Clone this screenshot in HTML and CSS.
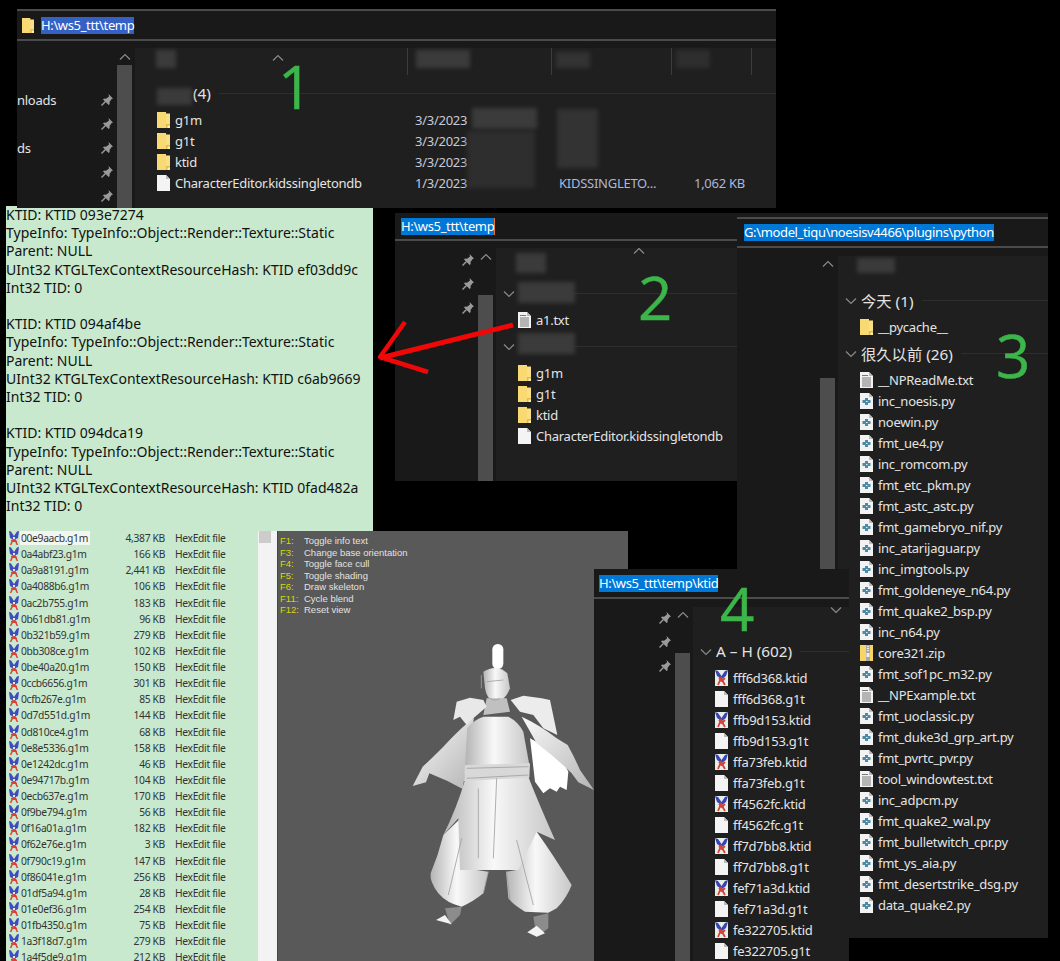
FILE: index.html
```html
<!DOCTYPE html>
<html lang="en">
<head>
  <meta charset="UTF-8">
  <title>temp</title>
  <link rel="stylesheet" href="styles.css">
</head>
<body>
  <svg class="defs">
    <symbol id="folder" viewBox="0 0 13 16">
      <path d="M0 0h7l2 1.500h4V16H0z" fill="#fbdf86"/>
      <path d="M0 0h9v12h4v4H0z" fill="#f9d972"/>
      <path d="M9 12h4v4H9z" fill="#e0b94c"/>
      <path d="M10.500 13.500H13V16h-2.500z" fill="#fff0b0"/>
    </symbol>
    <symbol id="file" viewBox="0 0 13 16">
      <path d="M0 0h9l4 4v12H0z" fill="#f4f4f4"/>
      <path d="M9 0l4 4H9z" fill="#bdbdbd"/>
    </symbol>
    <symbol id="txt" viewBox="0 0 13 16">
      <path d="M0 0h9l4 4v12H0z" fill="#f2f2f2"/>
      <path d="M9 0l4 4H9z" fill="#b8b8b8"/>
      <path d="M2 3.500h6M2 6h9M2 8h9M2 10h9M2 12h9M2 14h9" stroke="#777" fill="none"/>
    </symbol>
    <symbol id="py" viewBox="0 0 13 16">
      <path d="M0 0h9l4 4v12H0z" fill="#f2f2f2"/>
      <path d="M9 0l4 4H9z" fill="#bdbdbd"/>
      <path d="M5 5h3v2h2.500v3H8v2H5v-2H2.500V7H5z" fill="#4b8ba8"/>
      <path d="M6 8h1.500v1H6z" fill="#e8f2f6"/>
    </symbol>
    <symbol id="ktid" viewBox="0 0 13 16">
      <path d="M0 0h13v16H0z" fill="#e6efe6"/>
      <path d="M4 7h5v5H4z" fill="#8fc58f"/>
      <path d="M0 0l3 1 3.500 5L10 1l3-1-2 6-4.500 3L2 6z" fill="#3a45b4"/>
      <path d="M3 15L6 8l4 7M10 8l-3 3-3-3" stroke="#d8403a" stroke-width="1.800" fill="none"/>
    </symbol>
    <symbol id="g1m" viewBox="0 0 10 14">
      <path d="M0 0l2 .5L5 5l3-4.500L10 0 9 7 5 9 1 7z" fill="#3f4cc0"/>
      <path d="M4 6h2v2H4z" fill="#e8f0e8"/>
      <path d="M1.500 14L4.500 8M8.500 14L5.500 8M2 9.500l6 1" stroke="#d8403a" stroke-width="1.500" fill="none"/>
    </symbol>
    <symbol id="zip" viewBox="0 0 13 16">
      <path d="M0 0h13v16H0z" fill="#f8d568"/>
      <path d="M6 0h4v16H6z" fill="#a8a8a8"/>
      <path d="M7 1h2v1H7zM7 3h2v1H7zM7 5h2v1H7zM6.500 8h3v4h-3z" fill="#eee"/>
    </symbol>
    <symbol id="pin" viewBox="0 0 14 14">
      <path d="M8.500 1l4.500 4.500-1.300.6-2.200 3 .2 2-1 1L3 6.500l1-1 2 .2 3-2.200z" fill="#9a9a9a"/>
      <path d="M5.500 8.500L1.500 12.500" stroke="#9a9a9a" stroke-width="1.500"/>
    </symbol>
    <symbol id="chev" viewBox="0 0 14 8">
      <path d="M2 6.500l5-5 5 5" stroke="#8a8a8a" stroke-width="1.200" fill="none"/>
    </symbol>
  </svg>

  <!-- window 1 -->
  <div class="win win1">
    <div class="addr">
      <svg class="addr-folder"><use href="#folder"/></svg>
      <span class="path path-blue">H:\ws5_ttt\temp</span>
    </div>
    <div class="pane">
      <div class="side">
        <div class="nav">
          <div class="nav-row"><span>nloads</span><svg class="pin"><use href="#pin"/></svg></div>
          <div class="nav-row"><span></span><svg class="pin"><use href="#pin"/></svg></div>
          <div class="nav-row"><span>ds</span><svg class="pin"><use href="#pin"/></svg></div>
          <div class="nav-row"><span></span><svg class="pin"><use href="#pin"/></svg></div>
          <div class="nav-row"><span></span><svg class="pin"><use href="#pin"/></svg></div>
        </div>
        <div class="scroll">
          <div class="up"><svg class="chev"><use href="#chev"/></svg></div>
          <div class="thumb"></div>
        </div>
      </div>
      <div class="main">
        <div class="head">
          <div class="col col-name"><svg class="chev sort"><use href="#chev"/></svg></div>
          <div class="col col-date"></div>
          <div class="col col-type"></div>
          <div class="col col-size"></div>
        </div>
        <div class="group group-plain"><span>(4)</span><i></i></div>
        <div class="row"><svg class="ico"><use href="#folder"/></svg><span class="name">g1m</span><span class="date">3/3/2023</span></div>
        <div class="row"><svg class="ico"><use href="#folder"/></svg><span class="name">g1t</span><span class="date">3/3/2023</span></div>
        <div class="row"><svg class="ico"><use href="#folder"/></svg><span class="name">ktid</span><span class="date">3/3/2023</span></div>
        <div class="row"><svg class="ico"><use href="#file"/></svg><span class="name">CharacterEditor.kidssingletondb</span><span class="date">1/3/2023</span><span class="type">KIDSSINGLETO...</span><span class="size">1,062 KB</span></div>
      </div>
    </div>
  </div>

  <!-- opened a1.txt -->
  <div class="note">
    <p>KTID: KTID 093e7274<br>TypeInfo: TypeInfo::Object::Render::Texture::Static<br>Parent: NULL<br>UInt32 KTGLTexContextResourceHash: KTID ef03dd9c<br>Int32 TID: 0</p>
    <p>KTID: KTID 094af4be<br>TypeInfo: TypeInfo::Object::Render::Texture::Static<br>Parent: NULL<br>UInt32 KTGLTexContextResourceHash: KTID c6ab9669<br>Int32 TID: 0</p>
    <p>KTID: KTID 094dca19<br>TypeInfo: TypeInfo::Object::Render::Texture::Static<br>Parent: NULL<br>UInt32 KTGLTexContextResourceHash: KTID 0fad482a<br>Int32 TID: 0</p>
  </div>

  <!-- file list + noesis preview -->
  <div class="dump">
    <div class="list">
      <div class="item"><svg class="mini"><use href="#g1m"/></svg><span class="fname"><b>00e9aacb.g1m</b></span><span class="kb">4,387 KB</span><span class="kind">HexEdit file</span></div>
      <div class="item"><svg class="mini"><use href="#g1m"/></svg><span class="fname">0a4abf23.g1m</span><span class="kb">166 KB</span><span class="kind">HexEdit file</span></div>
      <div class="item"><svg class="mini"><use href="#g1m"/></svg><span class="fname">0a9a8191.g1m</span><span class="kb">2,441 KB</span><span class="kind">HexEdit file</span></div>
      <div class="item"><svg class="mini"><use href="#g1m"/></svg><span class="fname">0a4088b6.g1m</span><span class="kb">106 KB</span><span class="kind">HexEdit file</span></div>
      <div class="item"><svg class="mini"><use href="#g1m"/></svg><span class="fname">0ac2b755.g1m</span><span class="kb">183 KB</span><span class="kind">HexEdit file</span></div>
      <div class="item"><svg class="mini"><use href="#g1m"/></svg><span class="fname">0b61db81.g1m</span><span class="kb">96 KB</span><span class="kind">HexEdit file</span></div>
      <div class="item"><svg class="mini"><use href="#g1m"/></svg><span class="fname">0b321b59.g1m</span><span class="kb">279 KB</span><span class="kind">HexEdit file</span></div>
      <div class="item"><svg class="mini"><use href="#g1m"/></svg><span class="fname">0bb308ce.g1m</span><span class="kb">102 KB</span><span class="kind">HexEdit file</span></div>
      <div class="item"><svg class="mini"><use href="#g1m"/></svg><span class="fname">0be40a20.g1m</span><span class="kb">150 KB</span><span class="kind">HexEdit file</span></div>
      <div class="item"><svg class="mini"><use href="#g1m"/></svg><span class="fname">0ccb6656.g1m</span><span class="kb">301 KB</span><span class="kind">HexEdit file</span></div>
      <div class="item"><svg class="mini"><use href="#g1m"/></svg><span class="fname">0cfb267e.g1m</span><span class="kb">85 KB</span><span class="kind">HexEdit file</span></div>
      <div class="item"><svg class="mini"><use href="#g1m"/></svg><span class="fname">0d7d551d.g1m</span><span class="kb">144 KB</span><span class="kind">HexEdit file</span></div>
      <div class="item"><svg class="mini"><use href="#g1m"/></svg><span class="fname">0d810ce4.g1m</span><span class="kb">68 KB</span><span class="kind">HexEdit file</span></div>
      <div class="item"><svg class="mini"><use href="#g1m"/></svg><span class="fname">0e8e5336.g1m</span><span class="kb">158 KB</span><span class="kind">HexEdit file</span></div>
      <div class="item"><svg class="mini"><use href="#g1m"/></svg><span class="fname">0e1242dc.g1m</span><span class="kb">46 KB</span><span class="kind">HexEdit file</span></div>
      <div class="item"><svg class="mini"><use href="#g1m"/></svg><span class="fname">0e94717b.g1m</span><span class="kb">104 KB</span><span class="kind">HexEdit file</span></div>
      <div class="item"><svg class="mini"><use href="#g1m"/></svg><span class="fname">0ecb637e.g1m</span><span class="kb">170 KB</span><span class="kind">HexEdit file</span></div>
      <div class="item"><svg class="mini"><use href="#g1m"/></svg><span class="fname">0f9be794.g1m</span><span class="kb">56 KB</span><span class="kind">HexEdit file</span></div>
      <div class="item"><svg class="mini"><use href="#g1m"/></svg><span class="fname">0f16a01a.g1m</span><span class="kb">182 KB</span><span class="kind">HexEdit file</span></div>
      <div class="item"><svg class="mini"><use href="#g1m"/></svg><span class="fname">0f62e76e.g1m</span><span class="kb">3 KB</span><span class="kind">HexEdit file</span></div>
      <div class="item"><svg class="mini"><use href="#g1m"/></svg><span class="fname">0f790c19.g1m</span><span class="kb">147 KB</span><span class="kind">HexEdit file</span></div>
      <div class="item"><svg class="mini"><use href="#g1m"/></svg><span class="fname">0f86041e.g1m</span><span class="kb">256 KB</span><span class="kind">HexEdit file</span></div>
      <div class="item"><svg class="mini"><use href="#g1m"/></svg><span class="fname">01df5a94.g1m</span><span class="kb">28 KB</span><span class="kind">HexEdit file</span></div>
      <div class="item"><svg class="mini"><use href="#g1m"/></svg><span class="fname">01e0ef36.g1m</span><span class="kb">254 KB</span><span class="kind">HexEdit file</span></div>
      <div class="item"><svg class="mini"><use href="#g1m"/></svg><span class="fname">01fb4350.g1m</span><span class="kb">75 KB</span><span class="kind">HexEdit file</span></div>
      <div class="item"><svg class="mini"><use href="#g1m"/></svg><span class="fname">1a3f18d7.g1m</span><span class="kb">279 KB</span><span class="kind">HexEdit file</span></div>
      <div class="item"><svg class="mini"><use href="#g1m"/></svg><span class="fname">1a4f5de9.g1m</span><span class="kb">212 KB</span><span class="kind">HexEdit file</span></div>
    </div>
    <div class="strip"><div class="strip-thumb"></div></div>
    <div class="viewer">
      <div class="keys">
        <div class="key"><b>F1:</b><span>Toggle info text</span></div>
        <div class="key"><b>F3:</b><span>Change base orientation</span></div>
        <div class="key"><b>F4:</b><span>Toggle face cull</span></div>
        <div class="key"><b>F5:</b><span>Toggle shading</span></div>
        <div class="key"><b>F6:</b><span>Draw skeleton</span></div>
        <div class="key"><b>F11:</b><span>Cycle blend</span></div>
        <div class="key"><b>F12:</b><span>Reset view</span></div>
      </div>
      <svg class="figure" viewBox="0 0 1080 1308">
        <defs>
          <linearGradient id="cloth" x1="0" x2="1" y1="0" y2="0">
            <stop offset="0" stop-color="#b4b4b4"/>
            <stop offset=".45" stop-color="#f8f8f8"/>
            <stop offset="1" stop-color="#c6c6c6"/>
          </linearGradient>
          <linearGradient id="drape" x1="0" x2="1" y1="0" y2="1">
            <stop offset="0" stop-color="#fafafa"/>
            <stop offset="1" stop-color="#b4b4b4"/>
          </linearGradient>
          <filter id="soft"><feGaussianBlur stdDeviation="2"/></filter>
        </defs>
        <g filter="url(#soft)">
          <g fill="url(#cloth)">
            <path d="M780 640L870 690 895 740 890 795 870 785 860 800 840 790 820 805 795 770Z" fill="#fff"/>
            <rect x="667" y="357" width="33" height="75" rx="16" fill="#fff"/>
            <path d="M640 440Q680 415 712 445L720 490Q705 530 675 530 650 525 645 490Z"/>
            <path d="M650 520H710L720 560 640 570Z" fill="#c0c0c0"/>
            <path d="M612 578Q570 610 520 665 480 705 458 725L428 783 468 772 478 745Q530 765 578 792L592 700Z" fill="url(#drape)"/>
            <path d="M755 575Q810 600 860 640L893 660Q915 700 930 735L972 795 925 772 905 745Q860 700 800 655Z" fill="url(#drape)"/>
            <path d="M550 585L560 530 600 518 640 525 650 545 610 580 590 600 570 575Z" fill="#e8e8e8"/>
            <path d="M722 525L760 512 815 520 840 525 862 630 820 610 790 570 750 560Z" fill="#ececec"/>
            <path d="M592 610Q610 585 640 575H715Q745 590 760 620L778 720H585Z"/>
            <path d="M520 930L572 880 585 1030 655 1040 640 1105Q610 1130 575 1145 530 1135 505 1105 478 1070 482 1045 505 990 520 930Z"/>
            <path d="M745 945L800 920Q850 990 905 1080 890 1120 860 1150L835 1163 765 1160Q730 1140 715 1120L708 1040 740 1035Z"/>
            <path d="M585 765L775 755Q800 820 855 945L800 920 745 1035H570L565 880 520 930Q560 850 585 765Z"/>
            <path d="M585 720L780 715 778 758 582 768Z" fill="#d8d8d8"/>
          </g>
          <path d="M525 1150L575 1145 570 1170 540 1200Z" fill="#8c8c8c"/>
          <path d="M790 1175L835 1165 835 1210 800 1235Z" fill="#8c8c8c"/>
          <path d="M498 1185L525 1170 545 1198Z" fill="#f4f4f4"/>
          <path d="M772 1222L800 1202 825 1225 800 1235Z" fill="#f4f4f4"/>
          <g stroke="#a0a0a0" fill="none" stroke-width="2.500">
            <path d="M590 730L775 725M590 760L775 750M680 760L670 1000M625 790V1000M740 945L790 1140M575 940L535 1110M655 1040L640 1105M710 1040L720 1125"/>
            <path d="M650 470L700 465M660 520Q675 530 690 520M634 450V490"/>
          </g>
        </g>
      </svg>
    </div>
  </div>

  <!-- window 2 -->
  <div class="win win2">
    <div class="addr"><span class="path path-caret">H:\ws5_ttt\temp</span></div>
    <div class="pane">
      <div class="side">
        <div class="nav">
          <div class="nav-row"><span></span><svg class="pin"><use href="#pin"/></svg></div>
          <div class="nav-row"><span></span><svg class="pin"><use href="#pin"/></svg></div>
          <div class="nav-row"><span></span><svg class="pin"><use href="#pin"/></svg></div>
        </div>
        <div class="scroll">
          <div class="up"><svg class="chev"><use href="#chev"/></svg></div>
          <div class="thumb"></div>
        </div>
      </div>
      <div class="main">
        <div class="head"><svg class="chev sort"><use href="#chev"/></svg></div>
        <div class="group"><svg class="chev down"><use href="#chev"/></svg><span></span><i></i></div>
        <div class="row"><svg class="ico"><use href="#txt"/></svg><span class="name">a1.txt</span></div>
        <div class="group"><svg class="chev down"><use href="#chev"/></svg><span></span><i></i></div>
        <div class="row"><svg class="ico"><use href="#folder"/></svg><span class="name">g1m</span></div>
        <div class="row"><svg class="ico"><use href="#folder"/></svg><span class="name">g1t</span></div>
        <div class="row"><svg class="ico"><use href="#folder"/></svg><span class="name">ktid</span></div>
        <div class="row"><svg class="ico"><use href="#file"/></svg><span class="name">CharacterEditor.kidssingletondb</span></div>
      </div>
    </div>
  </div>

  <!-- window 3 -->
  <div class="win win3">
    <div class="addr"><span class="path">G:\model_tiqu\noesisv4466\plugins\python</span></div>
    <div class="pane">
      <div class="side">
        <div class="nav"></div>
        <div class="scroll">
          <div class="up"><svg class="chev"><use href="#chev"/></svg></div>
          <div class="thumb"></div>
        </div>
      </div>
      <div class="main">
        <div class="head"></div>
        <div class="group"><svg class="chev down"><use href="#chev"/></svg><span>今天 (1)</span><i></i></div>
        <div class="row"><svg class="ico"><use href="#folder"/></svg><span class="name">__pycache__</span></div>
        <div class="group"><svg class="chev down"><use href="#chev"/></svg><span>很久以前 (26)</span><i></i></div>
        <div class="row"><svg class="ico"><use href="#txt"/></svg><span class="name">__NPReadMe.txt</span></div>
        <div class="row"><svg class="ico"><use href="#py"/></svg><span class="name">inc_noesis.py</span></div>
        <div class="row"><svg class="ico"><use href="#py"/></svg><span class="name">noewin.py</span></div>
        <div class="row"><svg class="ico"><use href="#py"/></svg><span class="name">fmt_ue4.py</span></div>
        <div class="row"><svg class="ico"><use href="#py"/></svg><span class="name">inc_romcom.py</span></div>
        <div class="row"><svg class="ico"><use href="#py"/></svg><span class="name">fmt_etc_pkm.py</span></div>
        <div class="row"><svg class="ico"><use href="#py"/></svg><span class="name">fmt_astc_astc.py</span></div>
        <div class="row"><svg class="ico"><use href="#py"/></svg><span class="name">fmt_gamebryo_nif.py</span></div>
        <div class="row"><svg class="ico"><use href="#py"/></svg><span class="name">inc_atarijaguar.py</span></div>
        <div class="row"><svg class="ico"><use href="#py"/></svg><span class="name">inc_imgtools.py</span></div>
        <div class="row"><svg class="ico"><use href="#py"/></svg><span class="name">fmt_goldeneye_n64.py</span></div>
        <div class="row"><svg class="ico"><use href="#py"/></svg><span class="name">fmt_quake2_bsp.py</span></div>
        <div class="row"><svg class="ico"><use href="#py"/></svg><span class="name">inc_n64.py</span></div>
        <div class="row"><svg class="ico"><use href="#zip"/></svg><span class="name">core321.zip</span></div>
        <div class="row"><svg class="ico"><use href="#py"/></svg><span class="name">fmt_sof1pc_m32.py</span></div>
        <div class="row"><svg class="ico"><use href="#txt"/></svg><span class="name">__NPExample.txt</span></div>
        <div class="row"><svg class="ico"><use href="#py"/></svg><span class="name">fmt_uoclassic.py</span></div>
        <div class="row"><svg class="ico"><use href="#py"/></svg><span class="name">fmt_duke3d_grp_art.py</span></div>
        <div class="row"><svg class="ico"><use href="#py"/></svg><span class="name">fmt_pvrtc_pvr.py</span></div>
        <div class="row"><svg class="ico"><use href="#txt"/></svg><span class="name">tool_windowtest.txt</span></div>
        <div class="row"><svg class="ico"><use href="#py"/></svg><span class="name">inc_adpcm.py</span></div>
        <div class="row"><svg class="ico"><use href="#py"/></svg><span class="name">fmt_quake2_wal.py</span></div>
        <div class="row"><svg class="ico"><use href="#py"/></svg><span class="name">fmt_bulletwitch_cpr.py</span></div>
        <div class="row"><svg class="ico"><use href="#py"/></svg><span class="name">fmt_ys_aia.py</span></div>
        <div class="row"><svg class="ico"><use href="#py"/></svg><span class="name">fmt_desertstrike_dsg.py</span></div>
        <div class="row"><svg class="ico"><use href="#py"/></svg><span class="name">data_quake2.py</span></div>
      </div>
    </div>
  </div>

  <!-- window 4 -->
  <div class="win win4">
    <div class="addr"><span class="path">H:\ws5_ttt\temp\ktid</span></div>
    <div class="pane">
      <div class="side">
        <div class="nav">
          <div class="nav-row"><span></span><svg class="pin"><use href="#pin"/></svg></div>
          <div class="nav-row"><span></span><svg class="pin"><use href="#pin"/></svg></div>
          <div class="nav-row"><span></span><svg class="pin"><use href="#pin"/></svg></div>
        </div>
        <div class="scroll">
          <div class="up"><svg class="chev"><use href="#chev"/></svg></div>
          <div class="thumb"></div>
        </div>
      </div>
      <div class="main">
        <div class="head"><svg class="chev sort down"><use href="#chev"/></svg></div>
        <div class="group"><svg class="chev down"><use href="#chev"/></svg><span>A – H (602)</span><i></i></div>
        <div class="row"><svg class="ico"><use href="#ktid"/></svg><span class="name">fff6d368.ktid</span></div>
        <div class="row"><svg class="ico"><use href="#file"/></svg><span class="name">fff6d368.g1t</span></div>
        <div class="row"><svg class="ico"><use href="#ktid"/></svg><span class="name">ffb9d153.ktid</span></div>
        <div class="row"><svg class="ico"><use href="#file"/></svg><span class="name">ffb9d153.g1t</span></div>
        <div class="row"><svg class="ico"><use href="#ktid"/></svg><span class="name">ffa73feb.ktid</span></div>
        <div class="row"><svg class="ico"><use href="#file"/></svg><span class="name">ffa73feb.g1t</span></div>
        <div class="row"><svg class="ico"><use href="#ktid"/></svg><span class="name">ff4562fc.ktid</span></div>
        <div class="row"><svg class="ico"><use href="#file"/></svg><span class="name">ff4562fc.g1t</span></div>
        <div class="row"><svg class="ico"><use href="#ktid"/></svg><span class="name">ff7d7bb8.ktid</span></div>
        <div class="row"><svg class="ico"><use href="#file"/></svg><span class="name">ff7d7bb8.g1t</span></div>
        <div class="row"><svg class="ico"><use href="#ktid"/></svg><span class="name">fef71a3d.ktid</span></div>
        <div class="row"><svg class="ico"><use href="#file"/></svg><span class="name">fef71a3d.g1t</span></div>
        <div class="row"><svg class="ico"><use href="#ktid"/></svg><span class="name">fe322705.ktid</span></div>
        <div class="row"><svg class="ico"><use href="#file"/></svg><span class="name">fe322705.g1t</span></div>
      </div>
    </div>
  </div>

  <!-- smudges and annotations drawn over the screenshots -->
  <div class="smudge s1"></div>
  <div class="smudge s2"></div>
  <div class="smudge s3"></div>
  <div class="smudge s4"></div>
  <div class="smudge s5"></div>
  <div class="smudge s6"></div>
  <div class="smudge s7"></div>
  <div class="smudge s8"></div>
  <div class="smudge s9"></div>
  <div class="smudge s10"></div>
  <div class="smudge s11"></div>
  <span class="num n1">1</span>
  <span class="num n2">2</span>
  <span class="num n3">3</span>
  <span class="num n4">4</span>
  <svg class="arrow" viewBox="0 0 1060 961">
    <path d="M513 325L380 358" stroke="#f00808" stroke-width="5" fill="none"/>
    <path d="M405 322L380 357 428 372" stroke="#f00808" stroke-width="4.500" fill="none" stroke-linejoin="round"/>
  </svg>
</body>
</html>
```

FILE: styles.css
```css
html, body {
  margin: 0;
  height: 961px;
  overflow: hidden;
  background: #000;
  font-family: "Noto Sans", "Noto Sans CJK SC", sans-serif;
}
.defs {
  position: absolute;
  width: 0;
  height: 0;
}

/* explorer windows */
.win {
  position: absolute;
  display: flex;
  flex-direction: column;
  overflow: hidden;
  background: #191919;
  color: #e4e4e4;
  font-size: 13px;
  letter-spacing: -.26px;
}
.win1 { left: 17px; top: 9px; z-index: 1; width: 759px; height: 199px; }
.win2 { left: 395px; top: 213px; width: 342px; height: 268px; }
.win3 { left: 737px; top: 213px; width: 311px; height: 725px; padding-top: 4px; box-sizing: border-box; }
.win4 { left: 594px; top: 569px; width: 255px; height: 392px; }

.addr {
  display: flex;
  flex: none;
  align-items: center;
  box-sizing: border-box;
  padding-left: 6px;
  background: #191919;
  border-bottom: 2px solid #4b4b4b;
  font-size: 13px;
  letter-spacing: -.36px;
}
.win1 .addr { height: 32px; border-top: 2px solid #4b4b4b; padding-left: 5px; }
.win2 .addr { height: 28px; }
.win3 .addr { height: 31px; border-top: 2px solid #4b4b4b; padding-left: 7px; }
.win4 .addr { height: 30px; padding-left: 5px; }
.addr-folder { width: 12px; height: 15px; margin-right: 7px; }
.path {
  height: 17px;
  background: #0078d7;
  color: #fff;
  line-height: 17px;
  white-space: nowrap;
}
.path-blue { background: #3560c4; }
.path-caret { border-right: 1px solid #e8762a; }

.pane { display: flex; flex: 1; min-height: 0; }
.side { display: flex; flex: none; }
.win1 .side { width: 118px; }
.win2 .side { width: 101px; }
.win3 .side { width: 101px; }
.win4 .side { width: 99px; }
.nav { flex: 1; min-width: 0; }
.win1 .nav { padding-top: 47px; }
.win2 .nav { padding-top: 7px; }
.win4 .nav { padding-top: 7px; }
.nav-row {
  display: flex;
  align-items: center;
  justify-content: space-between;
  height: 24px;
  padding-right: 3px;
}
.pin { width: 14px; height: 14px; }
.scroll {
  display: flex;
  flex-direction: column;
  width: 15px;
  margin-right: 3px;
}
.up { display: flex; flex: none; justify-content: center; height: 23px; padding-top: 12px; box-sizing: border-box; }
.thumb { flex: 1; background: #4d4d4d; }
.win1 .thumb { margin-top: 1px; }
.win2 .thumb, .win4 .thumb { margin-top: 31px; }
.win3 .thumb { margin-top: 107px; }
.chev { width: 14px; height: 8px; flex: none; }
.down { transform: rotate(180deg); }

.main {
  flex: 1;
  min-width: 0;
  margin-top: 7px;
  background: #1f1f1f;
  overflow: hidden;
}
.win3 .main, .win4 .main { margin-top: 8px; }
.head { display: flex; height: 28px; }
.win1 .head, .win2 .head { height: 29px; }
.sort { margin-left: 136px; margin-top: -1px; }
.col { height: 27px; border-right: 1px solid #3d3d3d; box-sizing: border-box; }
.col-name { width: 273px; }
.col-date { width: 144px; }
.col-type { width: 120px; }
.col-size { width: 80px; }

.group {
  display: flex;
  align-items: center;
  gap: 3px;
  height: 21px;
  margin: 6px 0 5px;
  padding-left: 6px;
  font-size: 15.300px;
  letter-spacing: 0;
  white-space: nowrap;
}
.group span { margin-top: -2px; }
.group i {
  flex: 1;
  height: 1px;
  margin-left: 5px;
  background: #2e2e2e;
}
.group-plain { padding-left: 58px; }

.row {
  display: flex;
  align-items: center;
  height: 21px;
  padding-left: 22px;
  white-space: nowrap;
}
.ico { flex: none; width: 13px; height: 16px; margin-right: 5px; }
.name { width: 240px; flex: none; }
.date { width: 144px; flex: none; color: #c6cad8; }
.type { width: 113px; flex: none; color: #aeb6dc; }
.size { width: 73px; flex: none; text-align: right; color: #aeb6dc; }

/* a1.txt pasted on green */
.note {
  position: absolute;
  left: 6px;
  top: 206px;
  width: 367px;
  height: 325px;
  overflow: hidden;
  background: #c8e9cd;
  color: #111;
  font-size: 14px;
  line-height: 18.200px;
}
.note p { margin: 0 0 18.200px; }

/* g1m list and viewer */
.dump {
  position: absolute;
  left: 6px;
  top: 531px;
  display: flex;
  width: 622px;
  height: 430px;
}
.list {
  flex: none;
  width: 252px;
  margin-top: -1px;
  padding-left: 3px;
  box-sizing: border-box;
  background: #c8e9cd;
  color: #333;
  font-size: 10.300px;
  letter-spacing: -.33px;
}
.item { display: flex; align-items: center; height: 16.130px; white-space: nowrap; }
.mini { flex: none; width: 10px; height: 14px; margin-right: 2px; }
.fname { flex: none; width: 80px; }
.fname b { display: inline-block; padding: 0 2px 0 1px; margin-left: -1px; background: #f1f6f1; font-weight: normal; }
.kb { flex: none; width: 64px; text-align: right; }
.kind { margin-left: 10px; }
.strip { flex: none; width: 19px; background: #f3f3f3; }
.strip-thumb { width: 12px; height: 12px; margin-left: 1px; background: #ccc; }
.viewer {
  position: relative;
  flex: 1;
  overflow: hidden;
  background: #595959;
  border-left: 1px solid #444;
  font-family: "Liberation Sans", sans-serif;
  font-size: 9.500px;
}
.keys { padding: 4px 0 0 2px; }
.key { display: flex; height: 11.500px; line-height: 11.500px; color: #e2e2e2; }
.key b { width: 24px; font-weight: normal; color: #d8d800; }
.figure {
  position: absolute;
  left: -8px;
  top: -6px;
  width: 360px;
  height: 436px;
}

/* blurred-out bits */
.smudge { position: absolute; background: #3b3b3b; filter: blur(2px); }
.s1 { left: 156px; top: 50px; width: 20px; height: 18px; }
.s2 { left: 157px; top: 88px; width: 35px; height: 17px; }
.s3 { left: 416px; top: 50px; width: 54px; height: 18px; }
.s4 { left: 556px; top: 52px; width: 34px; height: 16px; background: #333; }
.s5 { left: 676px; top: 50px; width: 34px; height: 18px; background: #2e2e2e; }
.s6 { left: 472px; top: 108px; width: 65px; height: 21px; }
.s7 { left: 467px; top: 131px; width: 68px; height: 57px; background: #2e2e2e; }
.s8 { left: 557px; top: 109px; width: 41px; height: 59px; background: #333; }
.s9 { left: 516px; top: 253px; width: 30px; height: 20px; }
.s10 { left: 518px; top: 282px; width: 57px; height: 21px; box-shadow: 0 51px 0 #3b3b3b; }
.s11 { left: 857px; top: 258px; width: 38px; height: 15px; }

/* hand-marked numbers and arrow */
.num {
  position: absolute;
  z-index: 2;
  color: #3cb54a;
  font-family: "Open Sans", sans-serif;
  font-size: 60px;
  line-height: 46px;
  -webkit-text-stroke: .5px #3cb54a;
}
.n1 { left: 278px; top: 63px; }
.n2 { left: 638px; top: 274px; }
.n3 { left: 996px; top: 332px; }
.n4 { left: 720px; top: 585px; }
.smudge, .arrow { z-index: 2; }
.arrow {
  position: absolute;
  left: 0;
  top: 0;
  width: 1060px;
  height: 961px;
  pointer-events: none;
}
```
